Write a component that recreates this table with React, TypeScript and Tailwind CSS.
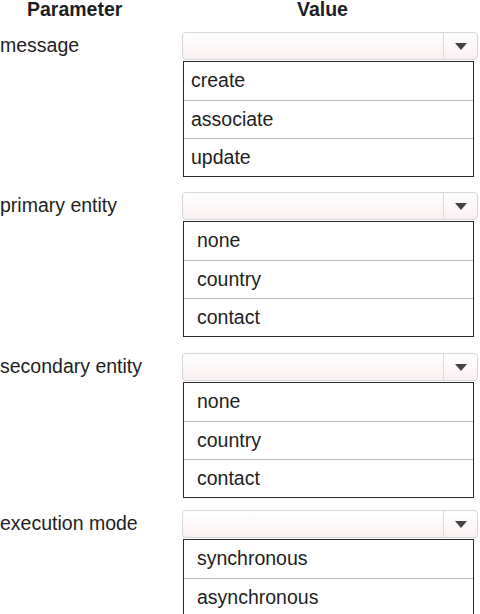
import React from "react";

type Group = { label: string; items: string[]; pad: string; mt: string };

const groups: Group[] = [
  { label: "message", items: ["create", "associate", "update"], pad: "pl-[7px]", mt: "mt-0" },
  { label: "primary entity", items: ["none", "country", "contact"], pad: "pl-[13px]", mt: "mt-[15px]" },
  { label: "secondary entity", items: ["none", "country", "contact"], pad: "pl-[13px]", mt: "mt-[16px]" },
  { label: "execution mode", items: ["synchronous", "asynchronous"], pad: "pl-[13px]", mt: "mt-[12px]" },
];

function SelectBox() {
  return (
    <div className="flex h-[28px] w-[296px] rounded-[4px] border border-[#d6d6d6] bg-gradient-to-b from-[#ffffff] to-[#fbf0f1]">
      <div className="flex-1" />
      <div className="flex w-[34px] items-center justify-center border-l border-[#dcdcdc]">
        <svg width="12" height="7" viewBox="0 0 12 7">
          <path d="M0 0 L12 0 L6 7 Z" fill="#444" />
        </svg>
      </div>
    </div>
  );
}

export default function App() {
  return (
    <div className="h-[614px] w-[480px] overflow-hidden bg-white font-['Liberation_Sans',Arial,sans-serif] text-[19.5px] text-[#1e1e1e]">
      <div className="flex h-[32px] items-start">
        <div className="w-[182px] pl-[27px] font-bold leading-none">Parameter</div>
        <div className="pl-[115px] font-bold leading-none">Value</div>
      </div>
      {groups.map((g) => (
        <div key={g.label} className={`flex ${g.mt}`}>
          <div className="flex h-[28px] w-[182px] items-center leading-none">{g.label}</div>
          <div className="flex flex-col">
            <SelectBox />
            <div className="ml-[1px] mt-[1px] w-[291px] border border-[#2a2a2a] bg-white">
              {g.items.map((it, i) => (
                <div
                  key={it}
                  className={`flex h-[38px] items-center leading-none ${g.pad} ${i > 0 ? "border-t border-[#bdbdbd]" : ""}`}
                >
                  {it}
                </div>
              ))}
            </div>
          </div>
        </div>
      ))}
    </div>
  );
}
